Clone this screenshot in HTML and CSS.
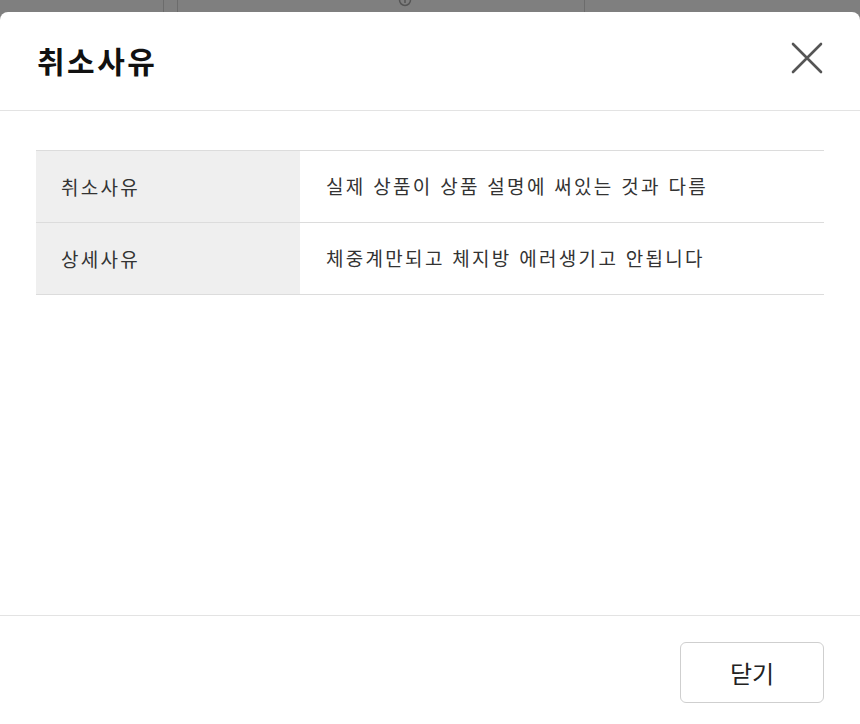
FILE: index.html
```html
<!DOCTYPE html>
<html lang="ko">
	<head>
		<meta charset="utf-8">
		<title>취소사유</title>
		<link rel="stylesheet" href="styles.css">
	</head>
	<body>
		<div class="under">
			<span class="cell c1"></span>
			<span class="cell c2"></span>
			<span class="cell c3">
				<svg class="info" width="14" height="14" viewBox="0 0 14 14"><circle cx="7" cy="7" r="5.5" fill="none" stroke="#555" stroke-width="1.5"/><path d="M7 5v5" stroke="#555" stroke-width="1.5"/></svg>
			</span>
			<span class="cell c4"></span>
		</div>
		<div class="modal">
			<div class="modal-head">
				<h2>취소사유</h2>
				<button class="close" type="button" aria-label="닫기">
					<svg width="32" height="32" viewBox="0 0 32 32"><path d="M2 2L30 30M30 2L2 30" stroke="#555" stroke-width="2.6" stroke-linecap="round"/></svg>
				</button>
			</div>
			<div class="modal-body">
				<table class="info-table">
					<tr>
						<th>취소사유</th>
						<td>실제 상품이 상품 설명에 써있는 것과 다름</td>
					</tr>
					<tr>
						<th>상세사유</th>
						<td>체중계만되고 체지방 에러생기고 안됩니다</td>
					</tr>
				</table>
			</div>
			<div class="modal-foot">
				<button class="btn" type="button">닫기</button>
			</div>
		</div>
	</body>
</html>
```
FILE: styles.css
```css
*{
	padding: 0;
	margin: 0;
	box-sizing: border-box;
}
body{
	background: #7f7f7f;
	font-family: "Noto Sans CJK KR", "Noto Sans", sans-serif;
	height: 724px;
	overflow: hidden;
}
.under{
	display: flex;
	height: 12px;
}
.cell{
	display: block;
	height: 12px;
	border-right: 1px solid #6c6c6c;
}
.c1{
	width: 164px;
}
.c2{
	width: 14px;
}
.c3{
	width: 407px;
	display: flex;
	justify-content: center;
}
.info{
	margin-top: -7px;
	margin-left: 48px;
}
.c4{
	flex: 1;
	border-right: none;
}
.modal{
	background: #fff;
	border-radius: 8px 8px 0 0;
	height: 712px;
}
.modal-head{
	height: 99px;
	display: flex;
	align-items: center;
	justify-content: space-between;
	padding: 0 37px 0 37px;
	border-bottom: 1px solid #e3e3e3;
}
.modal-head h2{
	font-size: 30px;
	font-weight: bold;
	color: #111;
	letter-spacing: 2.5px;
	margin-top: -2px;
}
.close{
	border: none;
	background: none;
	width: 32px;
	height: 32px;
	margin-top: -6px;
	cursor: pointer;
}
.close svg{
	display: block;
}
.modal-body{
	height: 504px;
	padding: 39px 36px 0 36px;
}
.info-table{
	width: 100%;
	border-collapse: collapse;
	font-size: 19px;
	letter-spacing: 2.3px;
}
.info-table tr{
	height: 72px;
	border-top: 1px solid #dcdcdc;
	border-bottom: 1px solid #dcdcdc;
}
.info-table th{
	width: 264px;
	background: #efefef;
	text-align: left;
	font-weight: normal;
	color: #333;
	padding-left: 25px;
}
.info-table td{
	color: #333;
	padding-left: 26px;
	padding-bottom: 2px;
}
.modal-foot{
	border-top: 1px solid #e3e3e3;
	display: flex;
	justify-content: flex-end;
	padding: 26px 36px 0 0;
}
.btn{
	width: 144px;
	height: 61px;
	background: #fff;
	border: 1px solid #cfcfcf;
	border-radius: 6px;
	font-family: "Noto Sans CJK KR", "Noto Sans", sans-serif;
	font-size: 24px;
	color: #222;
	cursor: pointer;
}
```
